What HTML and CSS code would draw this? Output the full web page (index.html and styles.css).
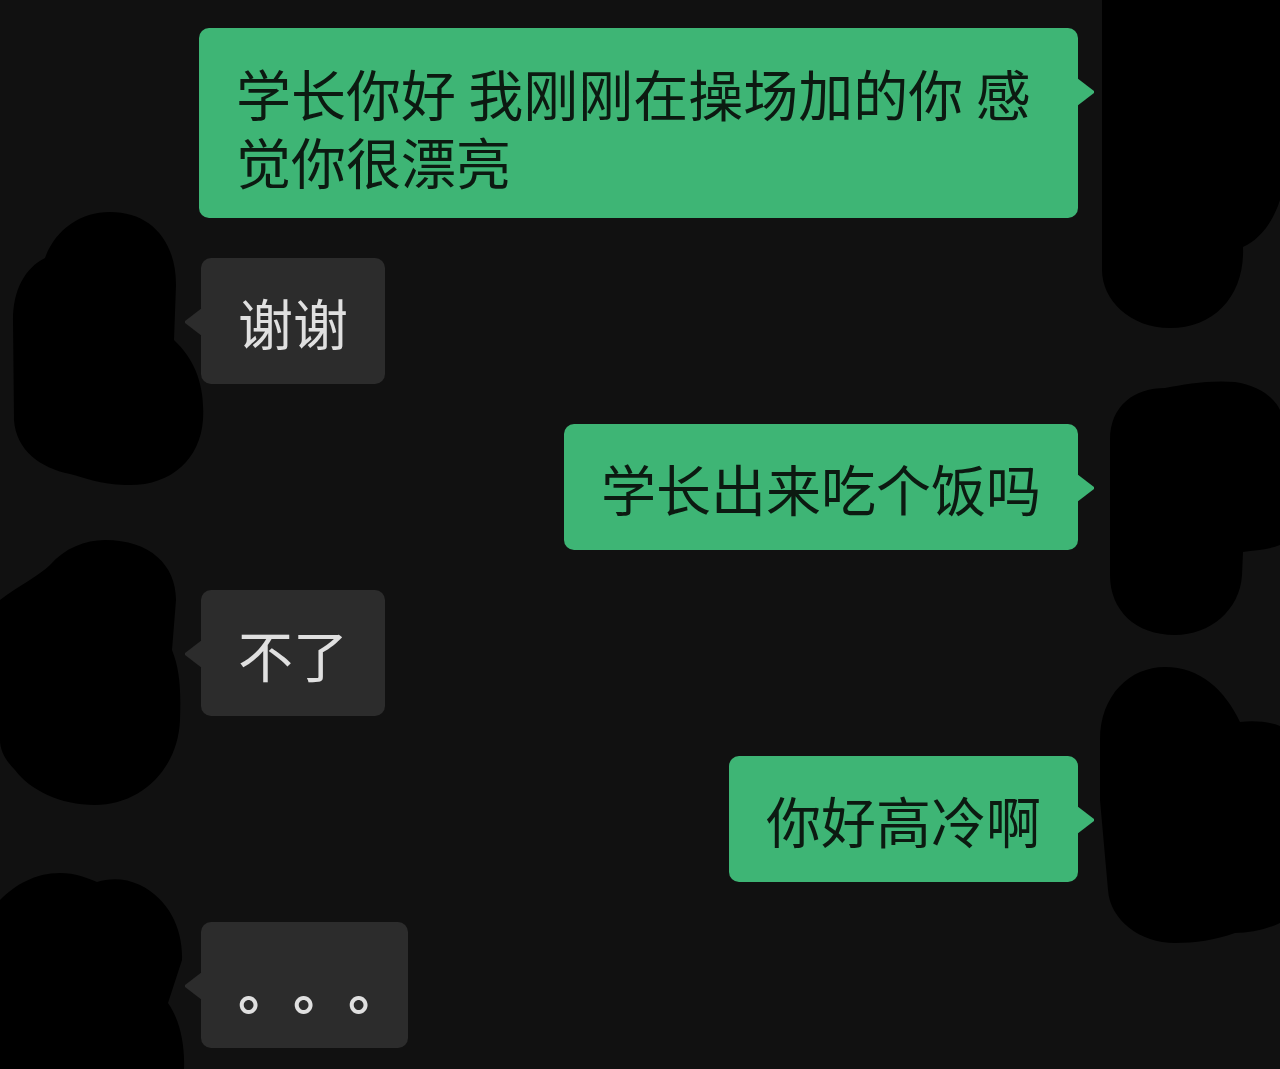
FILE: index.html
```html
<!DOCTYPE html>
<html lang="zh-CN">
<head>
    <meta charset="UTF-8">
    <meta name="viewport" content="width=device-width, initial-scale=1.0">
    <title>聊天记录</title>
    <link rel="stylesheet" href="styles.css">
</head>

<body>
    <div class="chat">
        <div class="msg msg-out">
            <div class="bubble bubble-multi">学长你好 我刚刚在操场加的你 感觉你很漂亮</div>
        </div>
        <div class="msg msg-in">
            <div class="bubble">谢谢</div>
        </div>
        <div class="msg msg-out">
            <div class="bubble">学长出来吃个饭吗</div>
        </div>
        <div class="msg msg-in">
            <div class="bubble">不了</div>
        </div>
        <div class="msg msg-out">
            <div class="bubble">你好高冷啊</div>
        </div>
        <div class="msg msg-in">
            <div class="bubble bubble-dots">。。。</div>
        </div>
    </div>

    <!-- scribbled-out avatars -->
    <svg class="redact" width="1280" height="1069" viewBox="0 0 1280 1069">
        <path d="M110 212 C150 212 176 240 176 285 L174 340 C195 360 205 385 203 420 C200 460 170 487 125 485 C100 484 85 478 70 474 C40 468 16 450 14 420 L13 320 C13 290 25 268 45 258 C55 230 80 212 110 212 Z"/>
        <path d="M105 540 C150 540 176 565 176 600 L172 650 C180 670 181 690 180 720 C178 770 140 805 95 805 C60 805 30 790 15 770 C5 760 0 750 0 740 L0 600 C20 585 40 575 50 565 C65 548 85 540 105 540 Z"/>
        <path d="M0 900 C15 885 35 873 60 873 C75 873 88 878 97 882 C110 878 125 878 140 885 C170 900 183 930 182 960 L168 1003 C180 1020 185 1045 184 1069 L0 1069 Z"/>
        <path d="M1102 0 L1280 0 L1280 200 C1272 225 1258 240 1243 247 C1245 295 1215 328 1170 328 C1130 328 1102 300 1102 270 Z"/>
        <path d="M1110 440 C1110 405 1135 388 1165 388 C1185 384 1210 380 1235 382 C1258 385 1275 398 1280 410 L1280 545 C1268 550 1255 550 1243 552 L1242 575 C1240 610 1210 635 1175 635 C1135 635 1110 610 1110 575 Z"/>
        <path d="M1100 740 C1100 695 1130 667 1165 667 C1200 667 1225 690 1240 722 C1255 720 1270 722 1280 726 L1280 923 C1265 930 1250 933 1235 933 C1215 940 1195 943 1175 943 C1140 943 1110 920 1108 890 L1100 800 Z"/>
    </svg>
</body>
</html>
```

FILE: styles.css
```css
html, body {
    margin: 0;
    height: 100%;
}

body {
    font-family: "Noto Sans CJK SC", "Noto Sans", sans-serif;
    background-color: #111111;
    position: relative;
    overflow: hidden;
}

.chat {
    display: flex;
    flex-direction: column;
    gap: 40px;
    padding-top: 28px;
}

.msg {
    display: flex;
}

.msg-out {
    justify-content: flex-end;
    padding-right: 202px;
}

.msg-in {
    justify-content: flex-start;
    padding-left: 201px;
}

.bubble {
    position: relative;
    max-width: 805px;
    padding: 29px 37px;
    border-radius: 10px;
    font-size: 55px;
    line-height: 68px;
    text-spacing-trim: space-all;
}

.bubble-multi {
    padding-top: 30px;
    padding-bottom: 24px;
}

.msg-out .bubble {
    background-color: #3eb575;
    color: #0c1a11;
}

.msg-in .bubble {
    background-color: #2c2c2c;
    color: #e0e0e0;
}

/* bubble tails */
.bubble::after {
    content: "";
    position: absolute;
    top: 50px;
    width: 17px;
    height: 28px;
}

.msg-out .bubble::after {
    right: -16px;
    background-color: #3eb575;
    clip-path: polygon(0 0, 100% 46%, 100% 54%, 0 100%);
}

.msg-in .bubble::after {
    left: -16px;
    background-color: #2c2c2c;
    clip-path: polygon(100% 0, 0 46%, 0 54%, 100% 100%);
}

.bubble-dots {
    padding-right: 5px;
    font-weight: 700;
}

.redact {
    position: absolute;
    top: 0;
    left: 0;
    pointer-events: none;
}

.redact path {
    fill: #000;
}
```
